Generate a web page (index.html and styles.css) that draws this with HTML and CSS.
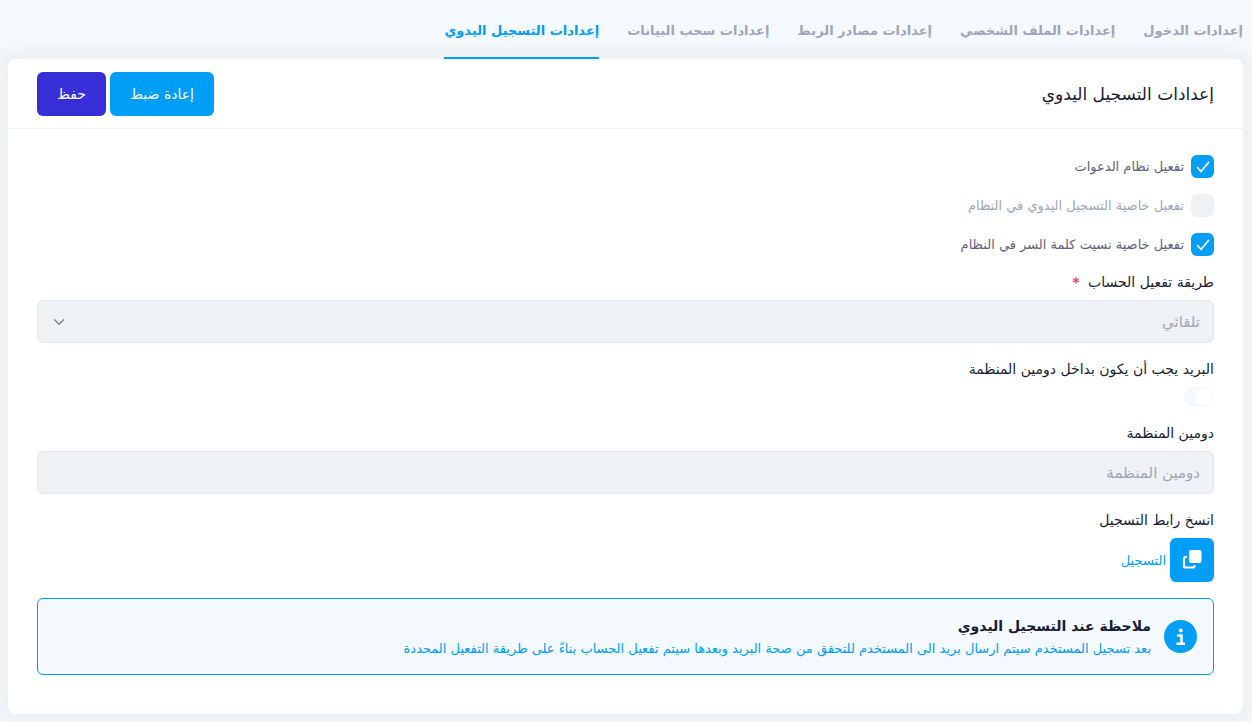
FILE: index.html
```html
<!DOCTYPE html>
<html lang="ar" dir="rtl">
<head>
  <meta charset="UTF-8">
  <meta name="viewport" content="width=device-width, initial-scale=1.0">
  <title>إعدادات التسجيل اليدوي</title>
  <link rel="stylesheet" href="styles.css">
</head>
<body>
  <nav class="tabs">
    <a class="tab" href="#login">إعدادات الدخول</a>
    <a class="tab" href="#profile">إعدادات الملف الشخصي</a>
    <a class="tab" href="#sources">إعدادات مصادر الربط</a>
    <a class="tab" href="#data">إعدادات سحب البيانات</a>
    <a class="tab active" href="#manual">إعدادات التسجيل اليدوي</a>
  </nav>

  <form class="card">
    <div class="card-header">
      <h3>إعدادات التسجيل اليدوي</h3>
      <div class="actions">
        <button type="reset" class="btn btn-primary">إعادة ضبط</button>
        <button type="submit" class="btn btn-save">حفظ</button>
      </div>
    </div>

    <div class="card-body">
      <div class="checks">
        <div class="check">
          <input type="checkbox" id="invitations" checked>
          <label for="invitations">تفعيل نظام الدعوات</label>
        </div>
        <div class="check">
          <input type="checkbox" id="manual-register" disabled>
          <label for="manual-register">تفعيل خاصية التسجيل اليدوي في النظام</label>
        </div>
        <div class="check">
          <input type="checkbox" id="forgot-password" checked>
          <label for="forgot-password">تفعيل خاصية نسيت كلمة السر في النظام</label>
        </div>
      </div>

      <div class="field">
        <label for="activation">طريقة تفعيل الحساب <span class="required">*</span></label>
        <div class="select-wrap">
          <select id="activation" class="control" disabled>
            <option>تلقائي</option>
          </select>
          <svg class="chevron" viewBox="0 0 16 16" width="12" height="12" aria-hidden="true">
            <path d="M2 5l6 6 6-6" fill="none" stroke="#7e8299" stroke-width="2" stroke-linecap="round" stroke-linejoin="round"/>
          </svg>
        </div>
      </div>

      <div class="field">
        <label for="domain-only">البريد يجب أن يكون بداخل دومين المنظمة</label>
        <input type="checkbox" role="switch" id="domain-only" class="switch" disabled>
      </div>

      <div class="field">
        <label for="domain">دومين المنظمة</label>
        <input type="text" id="domain" class="control" placeholder="دومين المنظمة" disabled>
      </div>

      <div class="field">
        <label for="copy-link">انسخ رابط التسجيل</label>
        <div class="copy-row">
          <button type="button" id="copy-link" class="btn btn-primary btn-icon" aria-label="نسخ">
            <svg viewBox="0 0 20 20" width="20" height="20" aria-hidden="true">
              <rect x="7" y="0" width="12.500" height="13" rx="2" fill="#fff"/>
              <path d="M5 7H3.500Q2 7 2 8.500V16Q2 17.500 3.500 17.500H11Q12.500 17.500 12.500 16V15" fill="none" stroke="#fff" stroke-width="2.200"/>
            </svg>
          </button>
          <a href="#register">التسجيل</a>
        </div>
      </div>

      <div class="notice">
        <svg class="notice-icon" viewBox="0 0 33 33" width="33" height="33" aria-hidden="true">
          <circle cx="16.500" cy="16.500" r="16.500" fill="#009ef7"/>
          <circle cx="16.700" cy="10.600" r="2" fill="#fff"/>
          <path d="M13 15.500h4.500v8M12.500 23.700h8.500" fill="none" stroke="#fff" stroke-width="2.600"/>
        </svg>
        <div>
          <h4>ملاحظة عند التسجيل اليدوي</h4>
          <p>بعد تسجيل المستخدم سيتم ارسال بريد الى المستخدم للتحقق من صحة البريد وبعدها سيتم تفعيل الحساب بناءً على طريقة التفعيل المحددة</p>
        </div>
      </div>
    </div>
  </form>
</body>
</html>
```
FILE: styles.css
```css
* {
  box-sizing: border-box;
}

body {
  margin: 0;
  padding: 0 9px 8px 8px;
  background-color: #f4f9fd;
  color: #181c32;
  font-family: "DejaVu Sans", sans-serif;
  font-size: 13px;
}

h3, h4, p {
  margin: 0;
}

a {
  color: #009ef7;
  text-decoration: none;
}

button, input, select {
  font-family: inherit;
}

.tabs {
  display: flex;
  gap: 28px;
  height: 59px;
  position: relative;
  z-index: 1;
}

.tab {
  padding-top: 18px;
  border-bottom: 2px solid transparent;
  color: #a1a5b7;
  font-size: 13px;
  font-weight: bold;
  line-height: 26px;
  white-space: nowrap;
}

.tab.active {
  color: #009ef7;
  border-color: #009ef7;
}

.card {
  background-color: #fff;
  border-radius: 8px;
  box-shadow: 0 0 12px 9px #edf1f4;
}

.card-header {
  display: flex;
  align-items: center;
  justify-content: space-between;
  height: 70px;
  padding: 0 29px;
  border-bottom: 1px solid #eff2f5;
}

.card-header h3 {
  font-size: 17px;
  font-weight: normal;
}

.actions {
  display: flex;
  gap: 4px;
}

.btn {
  height: 44px;
  padding: 0 20px;
  border: none;
  border-radius: 6px;
  color: #fff;
  font-size: 14px;
  cursor: pointer;
}

.btn-primary {
  background-color: #009ef7;
}

.btn-save {
  background-color: #372ed8;
}

.btn-icon {
  width: 44px;
  padding: 12px;
}

.btn-icon svg {
  display: block;
}

.card-body {
  padding: 26px 29px 39px;
}

.checks {
  display: flex;
  flex-direction: column;
  gap: 16px;
}

.check {
  display: flex;
  align-items: center;
  gap: 7px;
  height: 23px;
}

.check label {
  color: #5e6278;
}

.check input {
  appearance: none;
  width: 23px;
  height: 23px;
  margin: 0;
  border-radius: 6px;
  background: #eff2f5 no-repeat center;
}

.check input:checked {
  background-color: #009ef7;
  background-image: url("data:image/svg+xml,%3Csvg xmlns='http://www.w3.org/2000/svg' width='14' height='12' viewBox='0 0 14 12'%3E%3Cpath d='M1.500 6.500l3.500 4L12.500 1.500' fill='none' stroke='%23fff' stroke-width='1.800' stroke-linecap='round' stroke-linejoin='round'/%3E%3C/svg%3E");
}

.check input:disabled + label {
  color: #a1a5b7;
}

.field {
  margin-top: 14px;
}

.field > label {
  display: block;
  margin-bottom: 6px;
  font-size: 14px;
  line-height: 24px;
}

.required {
  margin-right: 4px;
  color: #f1416c;
  font-weight: bold;
}

.control {
  display: block;
  appearance: none;
  width: 100%;
  height: 43px;
  padding: 0 13px;
  border: 1px solid #e4e6ef;
  border-radius: 6px;
  background-color: #eff2f5;
  color: #a1a5b7;
  font-size: 15px;
  opacity: 1;
}

.control::placeholder {
  color: #a1a5b7;
}

.select-wrap {
  position: relative;
}

.chevron {
  position: absolute;
  left: 16px;
  top: 16px;
}

.switch {
  display: block;
  appearance: none;
  width: 30px;
  height: 20px;
  margin: 0;
  border-radius: 10px;
  background: radial-gradient(circle at 20px 10px, #fff 8px, #f4f9fd 9px);
}

.copy-row {
  display: flex;
  align-items: center;
  gap: 4px;
}

.notice {
  display: flex;
  align-items: center;
  gap: 13px;
  margin-top: 16px;
  padding: 12px 16px;
  min-height: 77px;
  border: 1px solid #009ef7;
  border-radius: 6px;
  background-color: #f4f9fd;
}

.notice-icon {
  flex-shrink: 0;
}

.notice h4 {
  font-size: 14px;
  line-height: 24px;
}

.notice p {
  color: #009ef7;
  line-height: 22px;
}
```
